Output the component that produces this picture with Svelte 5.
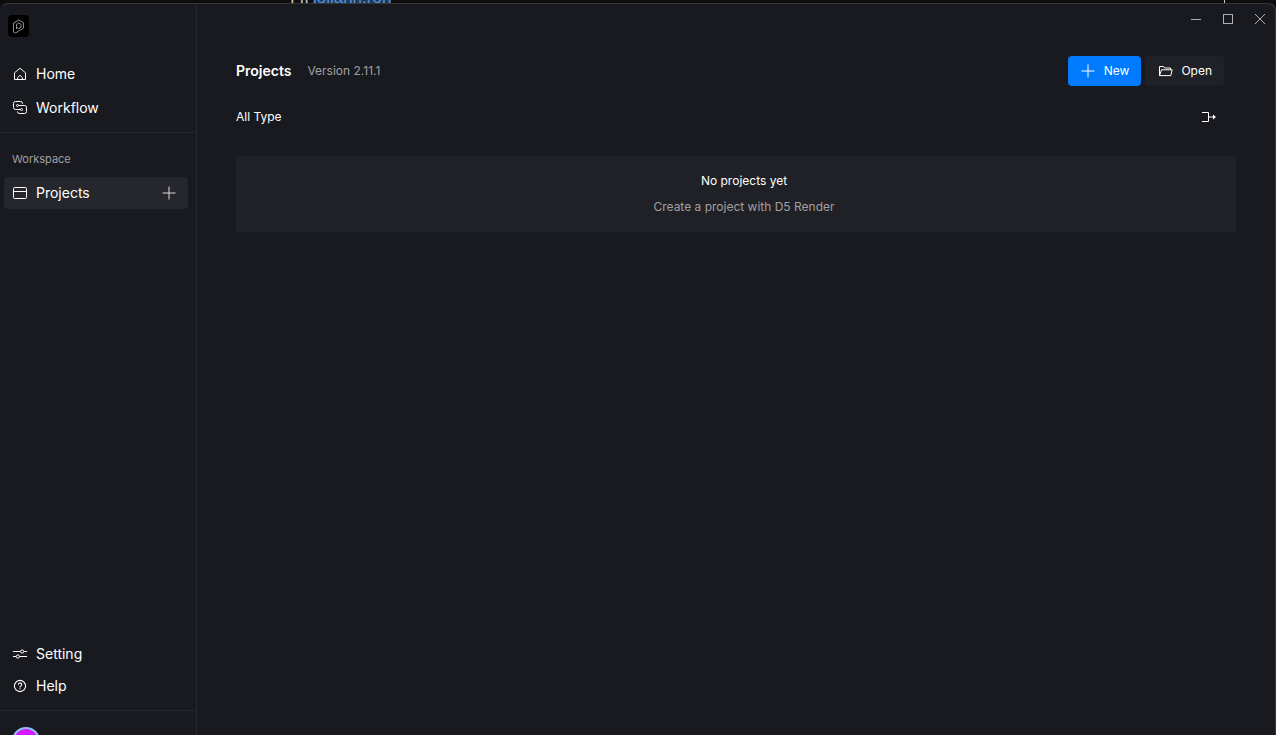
<script lang="ts">
  type Page = 'home' | 'workflow' | 'projects' | 'setting' | 'help';

  let current = $state<Page>('projects');
</script>

<div class="desktop">
  <div class="behind" aria-hidden="true">
    <span class="behind-text">I II</span>
    <span class="behind-selected">lollann.ron</span>
    <span class="behind-caret"></span>
  </div>

  <div class="window">
    <aside class="sidebar">
      <div class="logo">
        <svg width="21" height="22" viewBox="0 0 21 22" fill="none" stroke="#8f8f8f">
          <path d="M5.5 17V8L10.8 5L15.5 7.8V13L10.5 16.2L7.5 18Z" stroke-width="1" />
          <path d="M8.5 14V9.3L10.8 8L13 9.3V12.2L10.7 13.6L8.5 12.4" stroke-width="1" />
        </svg>
      </div>

      <nav class="nav">
        <button type="button" class="nav-item" class:active={current === 'home'} onclick={() => (current = 'home')}>
          <svg width="16" height="16" viewBox="0 0 16 16" fill="none" stroke="currentColor" stroke-linejoin="round">
            <path d="M2.5 6.8L8 2.2L13.5 6.8V13.5H2.5Z" />
            <path d="M5.6 13.4V11.8L8 9.2L10.4 11.8V13.4" />
          </svg>
          <span>Home</span>
        </button>
        <button type="button" class="nav-item" class:active={current === 'workflow'} onclick={() => (current = 'workflow')}>
          <svg width="16" height="16" viewBox="0 0 16 16" fill="none" stroke="currentColor">
            <path d="M10.5 4V3.5A2 2 0 0 0 8.5 1.5H3.5A2 2 0 0 0 1.5 3.5V7.5A2 2 0 0 0 3.5 9.5H8.5" />
            <path d="M6.5 5.5H12.5A2 2 0 0 1 14.5 7.5V11.5A2 2 0 0 1 12.5 13.5H7.5A2 2 0 0 1 5.5 11.5" />
            <circle cx="5.5" cy="5.5" r="1" />
            <circle cx="9.5" cy="9.5" r="1" />
          </svg>
          <span>Workflow</span>
        </button>
      </nav>

      <section class="workspace">
        <h2>Workspace</h2>
        <div class="nav-row" class:active={current === 'projects'}>
          <button type="button" class="nav-item" onclick={() => (current = 'projects')}>
            <svg width="16" height="16" viewBox="0 0 16 16" fill="none" stroke="currentColor">
              <rect x="1.5" y="2.5" width="13" height="11" rx="1" />
              <path d="M1.5 6.5H14.5" />
            </svg>
            <span>Projects</span>
          </button>
          <button type="button" class="add" aria-label="Add project">
            <svg width="14" height="14" viewBox="0 0 14 14" stroke="currentColor">
              <path d="M7 0.5V13.5M0.5 7H13.5" />
            </svg>
          </button>
        </div>
      </section>

      <nav class="nav-bottom">
        <button type="button" class="nav-item" class:active={current === 'setting'} onclick={() => (current = 'setting')}>
          <svg width="16" height="16" viewBox="0 0 16 16" fill="none" stroke="currentColor">
            <path d="M1 5.5H8.5M12 5.5H15M1 10.5H4M7.5 10.5H15" />
            <circle cx="10.2" cy="5.5" r="1.6" />
            <circle cx="5.8" cy="10.5" r="1.6" />
          </svg>
          <span>Setting</span>
        </button>
        <button type="button" class="nav-item" class:active={current === 'help'} onclick={() => (current = 'help')}>
          <svg width="16" height="16" viewBox="0 0 16 16" fill="none" stroke="currentColor" stroke-width="1.1">
            <circle cx="8" cy="8" r="5.6" />
            <path d="M6.3 6.7A1.7 1.7 0 1 1 8.8 8.1Q8 8.5 8 9.4M8 10.2V11.3" />
          </svg>
          <span>Help</span>
        </button>
      </nav>

      <div class="account">
        <button type="button" class="avatar" aria-label="Account"></button>
      </div>
    </aside>

    <div class="content">
      <div class="titlebar">
        <button type="button" aria-label="Minimize">
          <svg width="12" height="12" viewBox="0 0 12 12" stroke="currentColor">
            <path d="M1 6.5H11" />
          </svg>
        </button>
        <button type="button" aria-label="Maximize">
          <svg width="12" height="12" viewBox="0 0 12 12" fill="none" stroke="currentColor">
            <rect x="1.5" y="1.5" width="9" height="9" />
          </svg>
        </button>
        <button type="button" aria-label="Close">
          <svg width="12" height="12" viewBox="0 0 12 12" stroke="currentColor">
            <path d="M1 1L11 11M11 1L1 11" />
          </svg>
        </button>
      </div>

      <main>
        <header class="page-header">
          <h1>Projects</h1>
          <span class="version">Version 2.11.1</span>
          <div class="actions">
            <button type="button" class="btn primary">
              <svg width="16" height="16" viewBox="0 0 16 16" stroke="currentColor">
                <path d="M8 1.5V14.5M1.5 8H14.5" />
              </svg>
              <span>New</span>
            </button>
            <button type="button" class="btn">
              <svg width="16" height="16" viewBox="0 0 16 16" fill="none" stroke="currentColor" stroke-linejoin="round">
                <path d="M2.5 12.6V3.5H6.5L7.7 5H13.5V6.8" />
                <path d="M2.5 12.6L4.5 6.8H15.2L13.8 12.6Z" />
              </svg>
              <span>Open</span>
            </button>
          </div>
        </header>

        <div class="filter-bar">
          <button type="button" class="filter">All Type</button>
          <button type="button" class="export" aria-label="Migrate projects">
            <svg width="16" height="16" viewBox="0 0 16 16" fill="none" stroke="currentColor">
              <path d="M1 3.5H7.5V12.5H1M7.5 8H13" />
              <path d="M12 5.5L15 8L12 10.5Z" fill="currentColor" stroke="none" />
            </svg>
          </button>
        </div>

        <div class="empty">
          <p class="empty-title">No projects yet</p>
          <p class="empty-hint">Create a project with D5 Render</p>
        </div>
      </main>
    </div>
  </div>
</div>

<style>
  :global(body) {
    margin: 0;
    background: #0d0d0d;
  }
  .desktop {
    display: flex;
    flex-direction: column;
    height: 100vh;
    overflow: hidden;
    font-family: Inter, 'Liberation Sans', sans-serif;
    color: #fff;
  }
  button {
    appearance: none;
    margin: 0;
    padding: 0;
    border: none;
    background: none;
    color: inherit;
    font: inherit;
    cursor: pointer;
  }
  svg {
    display: block;
    flex-shrink: 0;
  }
  h1,
  h2,
  p {
    margin: 0;
  }
  .behind {
    display: flex;
    align-items: flex-end;
    gap: 4px;
    height: 3px;
    padding: 0 51px 0 290px;
    overflow: hidden;
    font-family: 'Liberation Sans', sans-serif;
    font-size: 17px;
    line-height: 10px;
  }
  .behind-text {
    color: #c4c4c4;
  }
  .behind-selected {
    background: #26384f;
    color: #4d94e6;
  }
  .behind-caret {
    width: 1px;
    height: 3px;
    margin-left: auto;
    background: #c4c4c4;
  }
  .window {
    display: flex;
    flex: 1;
    min-height: 0;
    box-sizing: border-box;
    border-top: 1px solid #37373a;
    border-right: 1px solid #37373a;
    border-radius: 8px 8px 0 0;
    background: #191a1f;
    overflow: hidden;
  }
  .sidebar {
    display: flex;
    flex-direction: column;
    flex: 0 0 196px;
    border-right: 1px solid #26272b;
  }
  .logo {
    width: 21px;
    height: 22px;
    margin: 11px 8px 21px;
    border-radius: 4px;
    background: #000;
  }
  .nav {
    display: flex;
    flex-direction: column;
    gap: 2px;
    padding: 0 8px 8px 4px;
    border-bottom: 1px solid #26272b;
  }
  .nav-item {
    display: flex;
    align-items: center;
    flex: 1;
    gap: 8px;
    height: 32px;
    padding: 0 8px;
    border-radius: 4px;
    font-size: 14px;
    line-height: 20px;
    text-align: left;
  }
  .nav > .nav-item,
  .nav-bottom > .nav-item {
    flex: none;
  }
  .active {
    background: #26272c;
  }
  .workspace {
    padding: 16px 8px 0 4px;
  }
  h2 {
    padding: 0 8px;
    margin-bottom: 8px;
    color: #a0a0a2;
    font-size: 11px;
    font-weight: 400;
    line-height: 20px;
  }
  .nav-row {
    display: flex;
    align-items: center;
    border-radius: 4px;
  }
  .add {
    padding: 8px 12px;
    color: #d8d8da;
  }
  .nav-bottom {
    display: flex;
    flex-direction: column;
    margin-top: auto;
    padding: 0 8px 8px 4px;
  }
  .account {
    height: 24px;
    border-top: 1px solid #26272b;
  }
  .avatar {
    display: block;
    width: 28px;
    height: 28px;
    margin: 16px 12px 0;
    border: 2px solid #92bdf5;
    border-radius: 50%;
    background: #d219ff;
  }
  .content {
    display: flex;
    flex-direction: column;
    flex: 1;
    min-width: 0;
  }
  .titlebar {
    display: flex;
    justify-content: flex-end;
    padding-bottom: 20px;
  }
  .titlebar button {
    padding: 9px 10px 11px;
    color: #b0b0b2;
  }
  .titlebar button:last-child {
    padding-right: 9px;
  }
  main {
    padding: 0 39px;
  }
  .page-header {
    display: flex;
    align-items: center;
    gap: 16px;
    padding-right: 12px;
  }
  h1 {
    font-size: 14px;
    font-weight: 600;
    line-height: 20px;
  }
  .version {
    color: #a0a0a2;
    font-size: 12px;
    line-height: 20px;
  }
  .actions {
    display: flex;
    gap: 4px;
    margin-left: auto;
  }
  .btn {
    display: flex;
    align-items: center;
    gap: 8px;
    height: 30px;
    padding: 0 12px;
    border-radius: 4px;
    background: #202126;
    font-size: 12px;
    line-height: 20px;
  }
  .primary {
    background: #007aff;
  }
  .filter-bar {
    display: flex;
    align-items: center;
    justify-content: space-between;
    padding: 21px 19px 29px 0;
  }
  .filter {
    font-size: 12px;
    line-height: 20px;
  }
  .empty {
    display: flex;
    flex-direction: column;
    align-items: center;
    gap: 6px;
    padding: 15px 16px 15px 32px;
    background: #202126;
    font-size: 12px;
    line-height: 20px;
  }
  .empty-hint {
    color: #a0a0a2;
  }
</style>
